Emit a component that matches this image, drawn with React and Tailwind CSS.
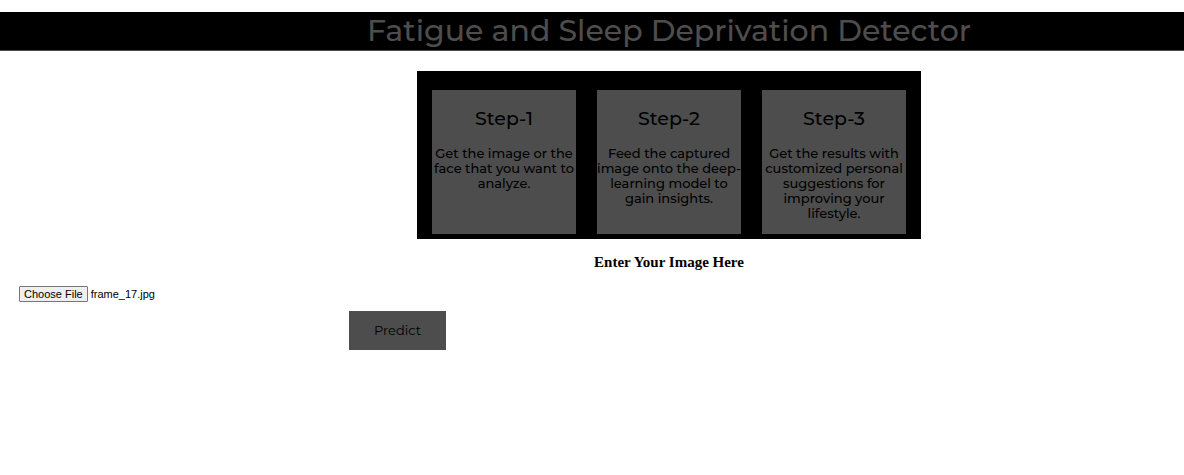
import { useRef, useState } from "react";

const steps = [
  { title: "Step-1", text: "Get the image or the face that you want to analyze." },
  { title: "Step-2", text: "Feed the captured image onto the deep-learning model to gain insights." },
  { title: "Step-3", text: "Get the results with customized personal suggestions for improving your lifestyle." },
];

function StepCard({ title, text }) {
  return (
    <li className="h-36 w-36 bg-[#4d4d4d] pt-[17px] text-center font-medium text-black">
      <h2 className="text-[19px] leading-6">{title}</h2>
      <p className="mt-[15px] text-[13px] leading-[15px]">{text}</p>
    </li>
  );
}

function FilePicker() {
  const input = useRef(null);
  const [name, setName] = useState("frame_17.jpg");
  return (
    <div className="flex items-center gap-[3px] pl-[19px] font-['Liberation_Sans',sans-serif] text-[11px] leading-[14px] text-black">
      <input
        ref={input}
        type="file"
        accept="image/*"
        aria-labelledby="image-heading"
        className="hidden"
        onChange={(e) => setName(e.target.files[0]?.name ?? "No file chosen")}
      />
      <button
        type="button"
        onClick={() => input.current.click()}
        className="rounded-[1px] border border-[#767676] bg-[#efefef] px-1"
      >
        Choose File
      </button>
      <span>{name}</span>
    </div>
  );
}

export default function App() {
  return (
    <div className="min-h-screen bg-white pt-3 font-['Montserrat','Inter',sans-serif]">
      <header className="border-b border-[#4d4d4d] bg-black pl-[154px] text-center text-[#4d4d4d]">
        <h1 className="text-[30px] leading-[38px] font-medium whitespace-nowrap">
          Fatigue and Sleep Deprivation Detector
        </h1>
      </header>
      <main>
        <div className="mt-5 flex flex-col items-center pl-[154px]">
          <ul className="flex w-[504px] justify-between bg-black px-[15px] pt-[19px] pb-[5px]">
            {steps.map((step) => (
              <StepCard key={step.title} {...step} />
            ))}
          </ul>
          <h2
            id="image-heading"
            className="mt-[15px] font-['Liberation_Serif',serif] text-[15px] leading-4 font-bold text-black"
          >
            Enter Your Image Here
          </h2>
        </div>
        <form className="mt-4" onSubmit={(e) => e.preventDefault()}>
          <FilePicker />
          <button
            type="submit"
            className="mt-[9px] ml-[349px] h-[39px] w-[97px] bg-[#4d4d4d] text-[13px] text-black"
          >
            Predict
          </button>
        </form>
      </main>
    </div>
  );
}
